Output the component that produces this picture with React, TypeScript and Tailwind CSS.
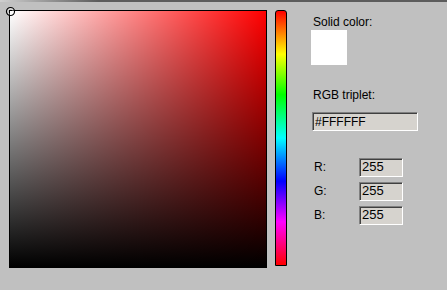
import React from "react";

export default function App() {
  const font = { fontFamily: '"Liberation Sans", Arial, sans-serif' };
  return (
    <div className="w-[447px] h-[290px] bg-[#c0c0c0] relative overflow-hidden text-black" style={font}>
      <div className="h-[2px] w-full bg-[linear-gradient(to_right,#cfcfcf_0%,#5c5c5c_22%,#5c5c5c_100%)]" />
      <div className="flex flex-row pl-[9px] pt-[8px]">
        {/* Saturation/value square */}
        <div className="relative w-[258px] h-[258px] border border-black bg-[#ff0000]">
          <div className="absolute inset-0 bg-[linear-gradient(to_right,#ffffff,rgba(255,255,255,0))]" />
          <div className="absolute inset-0 bg-[linear-gradient(to_bottom,rgba(0,0,0,0),#000000)]" />
        </div>
        {/* Hue bar */}
        <div className="ml-[8px] w-[12px] h-[256px] border border-black rounded-t-[3px] bg-[linear-gradient(to_bottom,#ff0000_0%,#ffff00_17%,#00ff00_33%,#00ffff_50%,#0000ff_67%,#ff00ff_83%,#ff0000_100%)]" />
        {/* Right panel */}
        <div className="ml-[24px] flex flex-col text-[12px] leading-[14px]">
          <div className="ml-[2px] mt-[5px]">Solid color:</div>
          <div className="mt-[1px] w-[36px] h-[35px] bg-white" />
          <div className="ml-[2px] mt-[23px]">RGB triplet:</div>
          <div className="mt-[10px] ml-[1px] w-[106px] h-[19px] bg-[#d6d3ce] border border-t-[#808080] border-l-[#808080] border-b-white border-r-white shadow-[inset_1px_1px_0_#404040] pl-[2px] flex items-center text-[12px]">
            #FFFFFF
          </div>
          <div className="mt-[26px] flex flex-col gap-[4px]">
            {["R:", "G:", "B:"].map((l) => (
              <div key={l} className="flex flex-row items-center h-[20px]">
                <div className="w-[48px] pl-[3px]">{l}</div>
                <div className="w-[44px] h-[19px] bg-[#d6d3ce] border border-t-[#808080] border-l-[#808080] border-b-white border-r-white shadow-[inset_1px_1px_0_#404040] pl-[2px] flex items-center text-[13px]">
                  255
                </div>
              </div>
            ))}
          </div>
        </div>
      </div>
      {/* Marker circle */}
      <svg className="absolute left-[5px] top-[6px]" width="11" height="11" viewBox="0 0 11 11">
        <circle cx="5.5" cy="5.5" r="4" fill="none" stroke="#000" strokeWidth="1.2" />
        <circle cx="5.5" cy="5.5" r="2.8" fill="none" stroke="#ffffff" strokeWidth="0.8" opacity="0.6" />
      </svg>
    </div>
  );
}
